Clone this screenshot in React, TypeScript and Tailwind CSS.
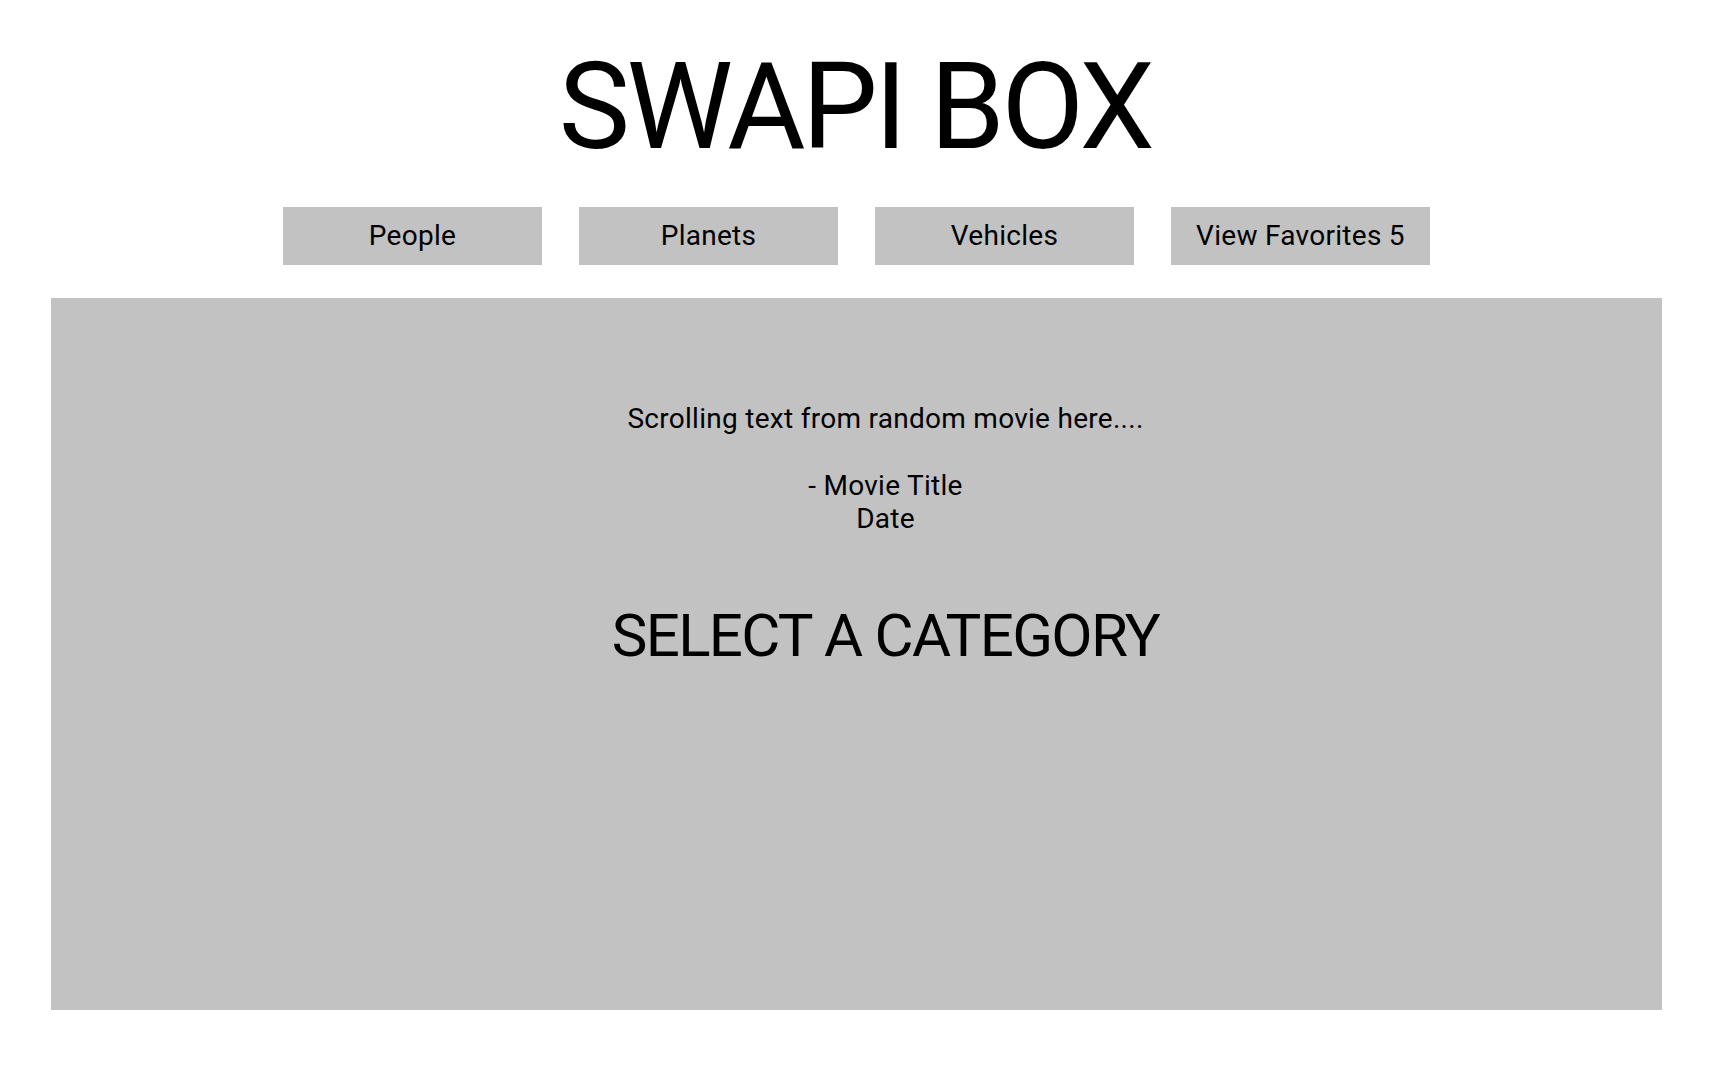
import React from "react";

const categories = ["People", "Planets", "Vehicles", "View Favorites 5"];

const App: React.FC = () => {
    return (
        <div className="min-h-[1070px] bg-white text-black font-['Roboto',sans-serif]">
            <h1 className="pt-[37px] text-center text-[120px] leading-[1.172] font-normal tracking-[-0.028em]">
                SWAPI BOX
            </h1>
            <nav className="mt-[29px] pl-[3px] flex justify-center gap-[37px]">
                {categories.map((name) => (
                    <button
                        key={name}
                        className="w-[259px] h-[58px] pt-[2px] bg-[#c2c2c2] text-[28px] leading-[1.172] tracking-[0.01em]"
                    >
                        {name}
                    </button>
                ))}
            </nav>
            <main className="ml-[51px] w-[1611px] mt-[33px] h-[712px] bg-[#c2c2c2] pl-[58px] pt-[105px] text-center">
                <p className="text-[28px] leading-[1.172] tracking-[0.01em]">
                    Scrolling text from random movie here....
                </p>
                <p className="mt-[35px] text-[28px] leading-[1.172] tracking-[0.01em]">
                    - Movie Title
                    <br />
                    Date
                </p>
                <h2 className="mt-[65px] text-[60px] leading-[1.172] tracking-[-0.028em]">
                    SELECT A CATEGORY
                </h2>
            </main>
        </div>
    );
};

export default App;
